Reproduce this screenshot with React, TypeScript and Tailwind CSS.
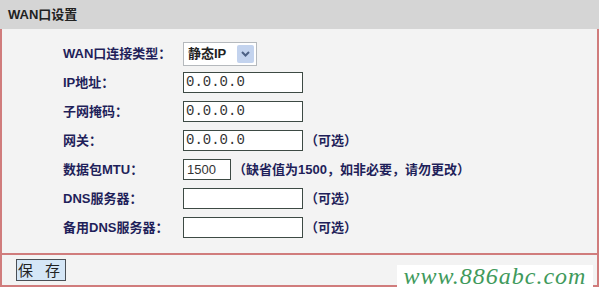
const cjk = "font-['Liberation_Sans','Noto_Sans_CJK_SC',sans-serif]";

const Row = ({ label, children }: { label: string; children: React.ReactNode }) => (
  <div className="flex h-[29px] items-center">
    <div className="w-[120px] text-[13px] font-bold text-[#1f1f5a]">{label}</div>
    {children}
  </div>
);

const Field = ({ value = "", w = "w-[120px]" }: { value?: string; w?: string }) => (
  <div
    className={`${w} flex h-[21px] items-center border border-[#3d4a44] bg-white pl-[2px] font-['Liberation_Mono',monospace] text-[14px] text-[#333]`}
  >
    {value}
  </div>
);

const Hint = ({ text }: { text: string }) => (
  <span className="ml-[2px] text-[13px] font-bold text-[#1f1f5a]">{text}</span>
);

export default function App() {
  return (
    <div className={`relative h-[288px] w-[600px] overflow-hidden bg-white ${cjk}`}>
      <div className="flex h-[29px] w-[599px] items-center bg-[#d5d5d5] pl-[8px] text-[13px] font-bold text-[#222]">
        WAN口设置
      </div>
      <div className="w-[599px] border-x-2 border-[#d07c7c] bg-[#f3f3f3]">
        <div className="h-[226px] border-b-2 border-[#d07c7c] pl-[61px] pt-[10px]">
          <Row label="WAN口连接类型：">
            <div className="flex h-[24px] w-[74px] items-center justify-between border border-[#b5b9bd] bg-white pl-[4px] pr-[2px] text-[13px] font-bold text-[#222]">
              静态IP
              <span className="flex h-[18px] w-[17px] items-center justify-center rounded-[2px] bg-[#c3d3ee]">
                <svg width="9" height="6" viewBox="0 0 9 6">
                  <path d="M1 1l3.5 3.5L8 1" fill="none" stroke="#4d6185" strokeWidth="2" />
                </svg>
              </span>
            </div>
          </Row>
          <Row label="IP地址：">
            <Field value="0.0.0.0" />
          </Row>
          <Row label="子网掩码：">
            <Field value="0.0.0.0" />
          </Row>
          <Row label="网关：">
            <Field value="0.0.0.0" />
            <Hint text="（可选）" />
          </Row>
          <Row label="数据包MTU：">
            <div className="flex h-[21px] w-[48px] items-center border border-[#3d4a44] bg-white pl-[3px] font-['Liberation_Sans',sans-serif] text-[13px] text-[#333]">
              1500
            </div>
            <Hint text="（缺省值为1500，如非必要，请勿更改）" />
          </Row>
          <Row label="DNS服务器：">
            <Field />
            <Hint text="（可选）" />
          </Row>
          <Row label="备用DNS服务器：">
            <Field />
            <Hint text="（可选）" />
          </Row>
        </div>
        <div className="flex h-[32px] items-center border-b-2 border-[#d07c7c] pl-[14px]">
          <button className="h-[22px] w-[50px] border border-[#4a4f55] bg-[#d5e6f6] text-[15px] tracking-[4px] text-[#222]">
            保 存
          </button>
        </div>
      </div>
      <div className="absolute bottom-0 left-[397px] flex h-[23px] w-[196px] items-end justify-center bg-white pb-[2px] font-['Liberation_Serif',serif] text-[24px] italic leading-[20px] tracking-[1px] text-[#3f9a5c]">
        www.886abc.com
      </div>
    </div>
  );
}
